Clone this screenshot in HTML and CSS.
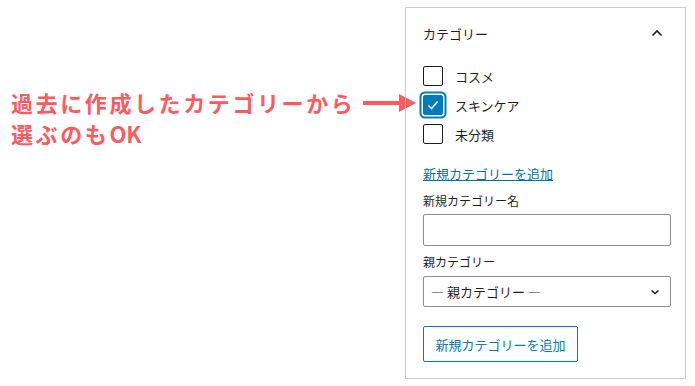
FILE: index.html
```html
<!DOCTYPE html>
<html lang="ja">
<head>
    <meta charset="UTF-8">
    <title>カテゴリー</title>
    <link rel="stylesheet" href="styles.css">
</head>
<body>
    <div class="page">
        <div class="note">
            <p class="note-text">過去に作成したカテゴリーから<br>選ぶのも<span class="ok">OK</span></p>
            <span class="note-arrow"></span>
        </div>

        <div class="panel">
            <div class="panel-header">
                <span class="panel-title">カテゴリー</span>
                <svg class="chevron" width="12" height="8" viewBox="0 0 12 8">
                    <path d="M1.5 6.5 L6 2 L10.5 6.5" fill="none" stroke="#1e1e1e" stroke-width="1.6"/>
                </svg>
            </div>
            <div class="panel-body">
                <ul class="cat-list">
                    <li><span class="check"></span>コスメ</li>
                    <li><span class="check checked"><svg width="14" height="14" viewBox="0 0 14 14"><path d="M2.5 7.5 L5.6 10.5 L11.5 3.5" fill="none" stroke="#fff" stroke-width="1.6"/></svg></span>スキンケア</li>
                    <li><span class="check"></span>未分類</li>
                </ul>
                <a class="add-link" href="#">新規カテゴリーを追加</a>
                <label class="field-label">新規カテゴリー名</label>
                <div class="text-input"></div>
                <label class="field-label parent-label">親カテゴリー</label>
                <div class="select">
                    <span>— 親カテゴリー —</span>
                    <svg width="10" height="6" viewBox="0 0 10 6">
                        <path d="M1.5 1.5 L5 4.5 L8.5 1.5" fill="none" stroke="#1e1e1e" stroke-width="1.5"/>
                    </svg>
                </div>
                <button class="add-button">新規カテゴリーを追加</button>
            </div>
        </div>
    </div>
</body>
</html>
```

FILE: styles.css
```css
body {
    margin: 0;
    background: #fff;
    font-family: "Noto Sans CJK JP", "Noto Sans", sans-serif;
    color: #1e1e1e;
}
.page {
    position: relative;
    width: 695px;
    height: 386px;
}
.note {
    position: absolute;
    left: 11px;
    top: 87px;
    display: flex;
    align-items: flex-start;
}
.note-text {
    margin: 0;
    font-size: 22px;
    font-weight: 700;
    letter-spacing: 2.6px;
    line-height: 31px;
    color: #ff5a5f;
}
.note-text .ok {
    letter-spacing: 0;
}
.note-arrow {
    position: relative;
    margin-left: 8px;
    margin-top: 14px;
    width: 38px;
    height: 4px;
    background: #ff5a5f;
}
.note-arrow::after {
    content: "";
    position: absolute;
    left: 36px;
    top: -7px;
    border-top: 9px solid transparent;
    border-bottom: 9px solid transparent;
    border-left: 17px solid #ff5a5f;
}
.panel {
    position: absolute;
    left: 405px;
    top: 7px;
    width: 281px;
    height: 372px;
    box-sizing: border-box;
    border: 1px solid #cccccc;
}
.panel-header {
    height: 50px;
    padding: 0 22px 0 17px;
    display: flex;
    align-items: center;
    justify-content: space-between;
    font-size: 13px;
}
.panel-body {
    padding: 8px 15px 0 17px;
    font-size: 13px;
}
.cat-list {
    list-style: none;
    margin: 0;
    padding: 0;
}
.cat-list li {
    display: flex;
    align-items: center;
    height: 20px;
    margin-bottom: 9px;
    font-size: 13px;
}
.check {
    width: 20px;
    height: 20px;
    box-sizing: border-box;
    border: 1.5px solid #1e1e1e;
    border-radius: 2px;
    margin-right: 12px;
    display: flex;
    align-items: center;
    justify-content: center;
}
.check.checked {
    background: #007cba;
    border-color: #007cba;
    box-shadow: 0 0 0 1.5px #fff, 0 0 0 3.5px #007cba;
}
.add-link {
    display: block;
    margin-top: 21px;
    line-height: 18px;
    color: #0073aa;
    text-decoration: underline;
}
.field-label {
    display: block;
    margin-top: 9px;
    line-height: 18px;
    font-size: 12px;
}
.parent-label {
    margin-top: 7px;
}
.text-input {
    margin-top: 4px;
    width: 248px;
    height: 32px;
    box-sizing: border-box;
    border: 1px solid #8c8f94;
    border-radius: 2px;
}
.select {
    margin-top: 5px;
    width: 248px;
    height: 31px;
    box-sizing: border-box;
    border: 1px solid #8c8f94;
    border-radius: 2px;
    padding: 0 10px 0 7px;
    display: flex;
    align-items: center;
    justify-content: space-between;
    font-size: 13px;
}
.add-button {
    margin-top: 19px;
    width: 155px;
    height: 36px;
    border: 1px solid #007cba;
    border-radius: 2px;
    background: #fff;
    color: #007cba;
    font-family: inherit;
    font-size: 13px;
    padding: 0;
}
```
